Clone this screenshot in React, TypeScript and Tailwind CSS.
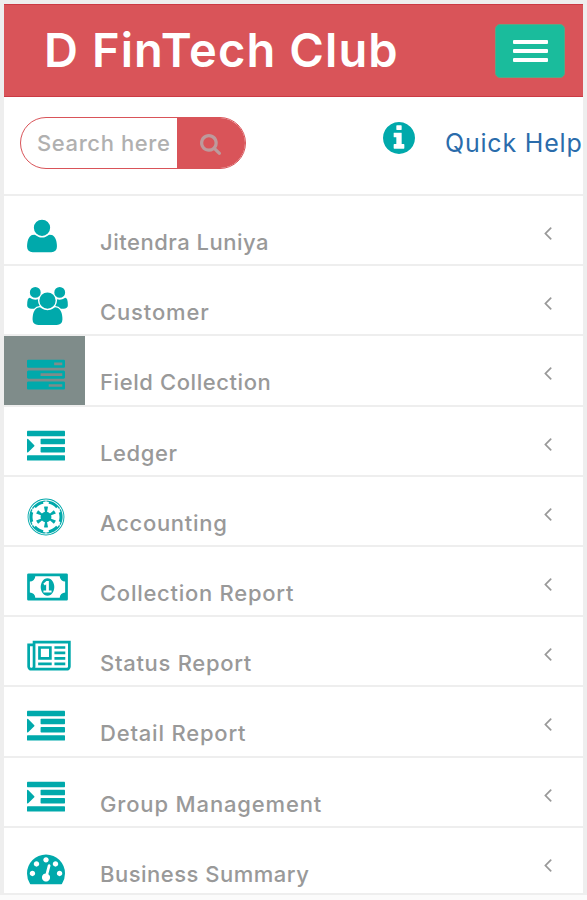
import type { ReactNode } from "react";
import { FaEmpire } from "react-icons/fa";

type IconProps = {
  viewBox: string;
  className: string;
  children: ReactNode;
};

function Glyph({ viewBox, className, children }: IconProps) {
  return (
    <svg viewBox={viewBox} className={className} fill="currentColor" aria-hidden="true">
      {children}
    </svg>
  );
}

function UserIcon() {
  return (
    <Glyph viewBox="192 0 1408 1792" className="w-[30px] h-[38px]">
      <path d="M1600 1405q0 120-73 189.5t-194 69.5h-874q-121 0-194-69.5t-73-189.5q0-53 3.5-103.5t14-109 26.5-108.5 43-97.5 62-81 85.5-53.5 111.5-20q10 0 43 21.5t73 48 107 48 135 21.5 135-21.5 107-48 73-48 43-21.5q61 0 111.5 20t85.5 53.5 62 81 43 97.5 26.5 108.5 14 109 3.5 103.5zm-320-893q0 159-112.5 271.5t-271.5 112.5-271.5-112.5-112.5-271.5 112.5-271.5 271.5-112.5 271.5 112.5 112.5 271.5z" />
    </Glyph>
  );
}

function UsersIcon() {
  return (
    <Glyph viewBox="0 0 1920 1792" className="w-[41px] h-[38px]">
      <path d="M593 896q-162 5-265 128h-134q-82 0-138-40.5t-56-118.5q0-353 124-353 6 0 43.5 21t97.5 42.5 119 21.5q67 0 133-23-5 37-5 66 0 139 81 256zm1071 637q0 120-73 189.5t-194 69.5h-874q-121 0-194-69.5t-73-189.5q0-53 3.5-103.5t14-109 26.5-108.5 43-97.5 62-81 85.5-53.5 111.5-20q10 0 43 21.5t73 48 107 48 135 21.5 135-21.5 107-48 73-48 43-21.5q61 0 111.5 20t85.5 53.5 62 81 43 97.5 26.5 108.5 14 109 3.5 103.5zm-1024-1277q0 106-75 181t-181 75-181-75-75-181 75-181 181-75 181 75 75 181zm704 384q0 159-112.5 271.5t-271.5 112.5-271.5-112.5-112.5-271.5 112.5-271.5 271.5-112.5 271.5 112.5 112.5 271.5zm576 225q0 78-56 118.5t-138 40.5h-134q-103-123-265-128 81-117 81-256 0-29-5-66 66 23 133 23 59 0 119-21.5t97.5-42.5 43.5-21q124 0 124 353zm-128-609q0 106-75 181t-181 75-181-75-75-181 75-181 181-75 181 75 75 181z" />
    </Glyph>
  );
}

function TasksIcon() {
  return (
    <Glyph viewBox="0 0 1792 1792" className="size-[38px]">
      <path d="M1024 1408h640v-128h-640v128zm-384-512h1024v-128h-1024v128zm640-512h384v-128h-384v128zm512 832v256q0 26-19 45t-45 19h-1664q-26 0-45-19t-19-45v-256q0-26 19-45t45-19h1664q26 0 45 19t19 45zm0-512v256q0 26-19 45t-45 19h-1664q-26 0-45-19t-19-45v-256q0-26 19-45t45-19h1664q26 0 45 19t19 45zm0-512v256q0 26-19 45t-45 19h-1664q-26 0-45-19t-19-45v-256q0-26 19-45t45-19h1664q26 0 45 19t19 45z" />
    </Glyph>
  );
}

function IndentIcon() {
  return (
    <Glyph viewBox="0 0 1792 1792" className="size-[38px]">
      <path d="M352 832q0 14-9 23l-288 288q-9 9-23 9-13 0-22.5-9.5t-9.5-22.5v-576q0-13 9.5-22.5t22.5-9.5q14 0 23 9l288 288q9 9 9 23z" />
      <rect x="0" y="128" width="1792" height="256" rx="32" />
      <rect x="640" y="512" width="1152" height="256" rx="32" />
      <rect x="640" y="896" width="1152" height="256" rx="32" />
      <rect x="0" y="1280" width="1792" height="256" rx="32" />
    </Glyph>
  );
}

function MoneyIcon() {
  return (
    <Glyph viewBox="0 0 1920 1792" className="w-[41px] h-[38px]">
      <path d="M768 1152h384v-96h-128v-448h-114l-148 137 77 80q42-37 55-57h2v288h-128v96zm512-256q0 70-21 142t-59.5 134-101.5 101-138 39-138-39-101.5-101-59.5-134-21-142 21-142 59.5-134 101.5-101 138-39 138 39 101.5 101 59.5 134 21 142zm512 256v-512q-106 0-181-75t-75-181h-1152q0 106-75 181t-181 75v512q106 0 181 75t75 181h1152q0-106 75-181t181-75zm128-832v1152q0 26-19 45t-45 19h-1792q-26 0-45-19t-19-45v-1152q0-26 19-45t45-19h1792q26 0 45 19t19 45z" />
    </Glyph>
  );
}

function NewspaperIcon() {
  return (
    <Glyph viewBox="0 0 2048 1792" className="w-[44px] h-[38px]">
      <path d="M1024 512h-384v384h384v-384zm128 640v128h-640v-128h640zm0-768v640h-640v-640h640zm640 768v128h-512v-128h512zm0-256v128h-512v-128h512zm0-256v128h-512v-128h512zm0-256v128h-512v-128h512zm-1536 960v-960h-128v960q0 26 19 45t45 19 45-19 19-45zm1664 0v-1088h-1536v1088q0 33-11 64h1483q26 0 45-19t19-45zm128-1216v1216q0 80-56 136t-136 56h-1664q-80 0-136-56t-56-136v-1088h256v-128h1792z" />
    </Glyph>
  );
}

function GaugeIcon() {
  return (
    <Glyph viewBox="0 0 1792 1792" className="size-[38px]">
      <path d="M384 1152q0-53-37.5-90.5t-90.5-37.5-90.5 37.5-37.5 90.5 37.5 90.5 90.5 37.5 90.5-37.5 37.5-90.5zm192-448q0-53-37.5-90.5t-90.5-37.5-90.5 37.5-37.5 90.5 37.5 90.5 90.5 37.5 90.5-37.5 37.5-90.5zm428 481l101-382q6-26-7.5-48.5t-38.5-29.5-48 6.5-30 39.5l-101 382q-60 5-107 43.5t-63 98.5q-20 77 20 146t117 89 146-20 89-117q16-60-6-117t-72-91zm660-33q0-53-37.5-90.5t-90.5-37.5-90.5 37.5-37.5 90.5 37.5 90.5 90.5 37.5 90.5-37.5 37.5-90.5zm-640-640q0-53-37.5-90.5t-90.5-37.5-90.5 37.5-37.5 90.5 37.5 90.5 90.5 37.5 90.5-37.5 37.5-90.5zm448 192q0-53-37.5-90.5t-90.5-37.5-90.5 37.5-37.5 90.5 37.5 90.5 90.5 37.5 90.5-37.5 37.5-90.5zm320 448q0 261-141 483-19 29-54 29h-1402q-35 0-54-29-141-221-141-483 0-182 71-348t191-286 286-191 348-71 348 71 286 191 191 286 71 348z" />
    </Glyph>
  );
}

function InfoIcon() {
  return (
    <Glyph viewBox="128 128 1536 1536" className="size-8">
      <path d="M1152 1376v-160q0-14-9-23t-23-9h-96v-512q0-14-9-23t-23-9h-320q-14 0-23 9t-9 23v160q0 14 9 23t23 9h96v320h-96q-14 0-23 9t-9 23v160q0 14 9 23t23 9h448q14 0 23-9t9-23zm-128-896v-160q0-14-9-23t-23-9h-192q-14 0-23 9t-9 23v160q0 14 9 23t23 9h192q14 0 23-9t9-23zm640 416q0 209-103 385.5t-279.5 279.5-385.5 103-385.5-103-279.5-279.5-103-385.5 103-385.5 279.5-279.5 385.5-103 385.5 103 279.5 279.5 103 385.5z" />
    </Glyph>
  );
}

function SearchIcon() {
  return (
    <Glyph viewBox="64 128 1664 1664" className="size-[21px]">
      <path d="M1216 832q0-185-131.5-316.5t-316.5-131.5-316.5 131.5-131.5 316.5 131.5 316.5 316.5 131.5 316.5-131.5 131.5-316.5zm512 832q0 52-38 90t-90 38q-54 0-90-38l-343-342q-179 124-399 124-143 0-273.5-55.5t-225-150-150-225-55.5-273.5 55.5-273.5 150-225 225-150 273.5-55.5 273.5 55.5 225 150 150 225 55.5 273.5q0 220-124 399l343 343q37 37 37 90z" />
    </Glyph>
  );
}

function AngleLeftIcon() {
  return (
    <Glyph viewBox="621 448 582 1024" className="w-2 h-[13px]">
      <path d="M1203 544q0 13-10 23l-393 393 393 393q10 10 10 23t-10 23l-50 50q-10 10-23 10t-23-10l-466-466q-10-10-10-23t10-23l466-466q10-10 23-10t23 10l50 50q10 10 10 23z" />
    </Glyph>
  );
}

const menu = [
  { label: "Jitendra Luniya", icon: <UserIcon />, tracking: "tracking-[0.5px]" },
  { label: "Customer", icon: <UsersIcon />, tracking: "tracking-[0.85px]" },
  { label: "Field Collection", icon: <TasksIcon />, tracking: "tracking-[0.58px]", active: true },
  { label: "Ledger", icon: <IndentIcon />, tracking: "tracking-[0.6px]" },
  { label: "Accounting", icon: <FaEmpire className="size-[38px]" />, tracking: "tracking-[0.7px]" },
  { label: "Collection Report", icon: <MoneyIcon />, tracking: "tracking-[0.73px]" },
  { label: "Status Report", icon: <NewspaperIcon />, tracking: "tracking-[0.7px]" },
  { label: "Detail Report", icon: <IndentIcon />, tracking: "tracking-[0.8px]" },
  { label: "Group Management", icon: <IndentIcon />, tracking: "tracking-[0.85px]" },
  { label: "Business Summary", icon: <GaugeIcon />, tracking: "tracking-[0.5px]" },
];

export default function App() {
  return (
    <div className="h-[900px] w-[587px] overflow-hidden bg-[#fbfbfb] font-['Inter',sans-serif]">
      <div className="h-[895px] bg-[#eee] pt-[4px] pl-[4px]">
        <div className="flex h-[889px] w-[579px] flex-col overflow-hidden bg-white">
          <header className="flex h-[93px] shrink-0 items-start justify-between border-y border-[#cb3a44] bg-[#d95459] pr-[18px] pl-[40px]">
            <h1 className="mt-[17px] text-[47px] leading-[56px] font-semibold tracking-[1.1px] whitespace-nowrap text-white">
              D FinTech Club
            </h1>
            <button
              aria-label="Toggle menu"
              className="mt-[19px] flex h-[54px] w-[70px] flex-col items-center justify-center gap-[5px] rounded-[5px] border border-[#5aa684] bg-[#1abc9c]"
            >
              <span className="h-[4px] w-[35px] rounded-[1px] bg-white" />
              <span className="h-[4px] w-[35px] rounded-[1px] bg-white" />
              <span className="h-[4px] w-[35px] rounded-[1px] bg-white" />
            </button>
          </header>

          <div className="flex h-[97px] shrink-0 items-start">
            <div className="mt-[20px] ml-[16px] flex h-[52px] w-[226px] shrink-0 overflow-hidden rounded-[26px] border border-[#d95459]">
              <div className="flex w-[156px] items-center pl-[16px]">
                <span className="text-[22px] font-medium tracking-[0.6px] whitespace-nowrap text-[#b0b0b0]">
                  Search here
                </span>
              </div>
              <button
                aria-label="Search"
                className="flex flex-1 items-center justify-center bg-[#d95459] pt-[2px] pr-[2px] text-[#bd9a9c]"
              >
                <SearchIcon />
              </button>
            </div>
            <div className="mt-[25px] ml-[137px] text-[#00a9ab]">
              <InfoIcon />
            </div>
            <a
              href="#help"
              className="mt-[30px] ml-[30px] text-[25px] leading-[32px] tracking-[0.8px] whitespace-nowrap text-[#2a6cab]"
            >
              Quick Help
            </a>
          </div>

          <nav>
            {menu.map((item) => (
              <a
                key={item.label}
                href="#menu"
                className="flex h-[70.2px] items-start border-t-2 border-[#eee] text-[#999]"
              >
                <span
                  className={`flex h-full w-[81px] shrink-0 items-start pt-[21px] pl-[22.5px] text-[#00a9ab] ${
                    item.active ? "bg-[#7f8c8a]" : ""
                  }`}
                >
                  {item.icon}
                </span>
                <span
                  className={`mt-[30px] ml-[15px] text-[22px] leading-[32px] font-medium whitespace-nowrap ${item.tracking}`}
                >
                  {item.label}
                </span>
                <span className="mt-[31px] mr-[31px] ml-auto">
                  <AngleLeftIcon />
                </span>
              </a>
            ))}
          </nav>
        </div>
      </div>
    </div>
  );
}
